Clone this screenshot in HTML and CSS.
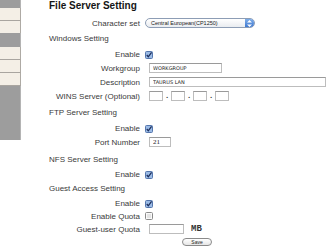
FILE: index.html
```html
<!DOCTYPE html>
<html lang="en">
<head>
  <meta charset="UTF-8" />
  <title>File Server Setting</title>
  <link rel="stylesheet" href="styles.css">
</head>
<body>

  <div class="page">
    <!-- left menu strip -->
    <div class="sidebar">
      <div class="nav-head head-top"></div>
      <div class="nav-item"></div>
      <div class="nav-item last"></div>
      <div class="nav-head head-mid"></div>
      <div class="nav-item"></div>
      <div class="nav-item"></div>
      <div class="nav-item"></div>
      <div class="nav-head head-low"></div>
    </div>

    <div class="content">
      <h1 class="title">File Server Setting</h1>

      <div class="row row-charset">
        <span class="label">Character set</span>
        <div class="select">
          <span class="select-text">Central European(CP1250)</span>
          <span class="select-arrows">
            <svg width="7" height="9" viewBox="0 0 7 9"><path d="M3.5 1 L6 3.6 H1 Z M3.5 8 L6 5.4 H1 Z" fill="#fff"/></svg>
          </span>
        </div>
      </div>

      <!-- Windows -->
      <div class="section">Windows Setting</div>
      <div class="row row-check first">
        <span class="label">Enable</span>
        <span class="check on"><svg width="8" height="8" viewBox="0 0 8 8"><rect x="0.5" y="0.5" width="7" height="7" rx="1" fill="#9bbbe6" stroke="#5576ad"/><path d="M1.8 4 L3.3 5.8 L6.6 1.4" stroke="#1d2f5c" stroke-width="1.3" fill="none"/></svg></span>
      </div>
      <div class="row">
        <span class="label">Workgroup</span>
        <input class="field field-mid" type="text" value="WORKGROUP">
      </div>
      <div class="row">
        <span class="label">Description</span>
        <input class="field field-wide" type="text" value="TAURUS LAN">
      </div>
      <div class="row">
        <span class="label">WINS Server (Optional)</span>
        <div class="ip">
          <input class="field field-ip" type="text">
          <span class="dot">.</span>
          <input class="field field-ip" type="text">
          <span class="dot">.</span>
          <input class="field field-ip" type="text">
          <span class="dot">.</span>
          <input class="field field-ip" type="text">
        </div>
      </div>

      <!-- FTP -->
      <div class="section sec-ftp">FTP Server Setting</div>
      <div class="row row-check first">
        <span class="label">Enable</span>
        <span class="check on"><svg width="8" height="8" viewBox="0 0 8 8"><rect x="0.5" y="0.5" width="7" height="7" rx="1" fill="#9bbbe6" stroke="#5576ad"/><path d="M1.8 4 L3.3 5.8 L6.6 1.4" stroke="#1d2f5c" stroke-width="1.3" fill="none"/></svg></span>
      </div>
      <div class="row">
        <span class="label">Port Number</span>
        <input class="field field-port" type="text" value="21">
      </div>

      <!-- NFS -->
      <div class="section sec-nfs">NFS Server Setting</div>
      <div class="row row-check after-nfs">
        <span class="label">Enable</span>
        <span class="check on"><svg width="8" height="8" viewBox="0 0 8 8"><rect x="0.5" y="0.5" width="7" height="7" rx="1" fill="#9bbbe6" stroke="#5576ad"/><path d="M1.8 4 L3.3 5.8 L6.6 1.4" stroke="#1d2f5c" stroke-width="1.3" fill="none"/></svg></span>
      </div>

      <!-- Guest -->
      <div class="section sec-guest">Guest Access Setting</div>
      <div class="row row-check after-guest">
        <span class="label">Enable</span>
        <span class="check on"><svg width="8" height="8" viewBox="0 0 8 8"><rect x="0.5" y="0.5" width="7" height="7" rx="1" fill="#9bbbe6" stroke="#5576ad"/><path d="M1.8 4 L3.3 5.8 L6.6 1.4" stroke="#1d2f5c" stroke-width="1.3" fill="none"/></svg></span>
      </div>
      <div class="row row-check short">
        <span class="label">Enable Quota</span>
        <span class="check"><svg width="8" height="8" viewBox="0 0 8 8"><rect x="0.5" y="0.5" width="7" height="7" rx="1" fill="#fafafa" stroke="#8a8a8a"/><rect x="2" y="2" width="4" height="4" fill="#e4e4e4"/></svg></span>
      </div>
      <div class="row">
        <span class="label">Guest-user Quota</span>
        <div class="quota">
          <input class="field field-quota" type="text">
          <span class="unit">MB</span>
        </div>
      </div>

      <div class="actions">
        <button class="save">Save</button>
      </div>
    </div>
  </div>

</body>
</html>
```

FILE: styles.css
```css
body {
  margin: 0;
  background: #fff;
  font-family: 'Liberation Sans', Arial, Helvetica, sans-serif;
  font-size: 8px;
  color: #3a3a3a;
}

.page {
  display: flex;
  align-items: flex-start;
}

.sidebar {
  width: 21px;
  flex-shrink: 0;
}

.nav-head {
  background-color: #9d9d9d;
  border-right: 1px solid #b4b4b4;
}

.head-top { height: 8px; }
.head-mid { height: 14px; }
.head-low { height: 54px; }

.nav-item {
  height: 12px;
  background-color: #f4efe6;
  border-bottom: 1px solid #a9a59f;
  border-right: 1px solid #aeaaa4;
}

.nav-item.last {
  border-bottom: none;
}

.content {
  flex: 1;
}

.title {
  margin: 0 0 0 28px;
  height: 12px;
  line-height: 12px;
  font-size: 10px;
  font-weight: bold;
  color: #151515;
}

.section {
  height: 14px;
  line-height: 14px;
  padding-left: 28px;
  margin-top: 3px;
}

.sec-ftp { margin-top: 3px; }
.sec-nfs { margin-top: 4px; }
.sec-guest { margin-top: 1px; }

.row {
  display: grid;
  grid-template-columns: 119px auto;
  column-gap: 5px;
  align-items: center;
  justify-content: start;
  height: 14px;
}

.row-charset {
  height: 12px;
  margin-top: 5px;
}

.row-check {
  height: 13px;
}

.row-check.first {
  margin-top: 2px;
}

.row-check.after-nfs {
  margin-top: 1px;
}

.row-check.after-guest {
  margin-top: 1px;
}

.row-check.short {
  height: 12px;
}

.label {
  text-align: right;
  white-space: nowrap;
}

/* aqua-like popup */
.select {
  display: flex;
  align-items: center;
  width: 110px;
  height: 10px;
  box-sizing: border-box;
  border: 1px solid #8d9db5;
  border-radius: 5px;
  background: linear-gradient(#ffffff, #e9ecf0);
  overflow: hidden;
}

.select-text {
  padding-left: 5px;
  font-size: 5.5px;
  color: #222;
  flex: 1;
}

.select-arrows {
  display: flex;
  align-items: center;
  justify-content: center;
  width: 9px;
  height: 100%;
  background: linear-gradient(#7eaeea, #3f78cf);
}

.check {
  display: flex;
  align-items: center;
}

.check svg {
  display: block;
}

.field {
  box-sizing: border-box;
  height: 10px;
  margin: 0 0 0 4px;
  padding: 0 3px;
  border: 1px solid #bdbdbd;
  border-top-color: #9a9a9a;
  background: #fff;
  font-family: 'DejaVu Sans', 'Liberation Sans', sans-serif;
  font-size: 5px;
  color: #222;
  outline: none;
}

.field-mid { width: 73px; }
.field-wide { width: 177px; }
.field-port {
  width: 22px;
  font-family: 'Liberation Serif', serif;
  font-size: 7px;
}
.field-quota { width: 35px; }

.ip {
  display: flex;
  align-items: center;
}

.field-ip {
  width: 14px;
  margin: 0;
}

.ip .field-ip:first-child {
  margin-left: 4px;
}

.dot {
  width: 8px;
  text-align: center;
  font-weight: bold;
  line-height: 8px;
}

.quota {
  display: flex;
  align-items: center;
}

.unit {
  margin-left: 7px;
  font-family: 'Liberation Mono', monospace;
  font-size: 9px;
  font-weight: bold;
  color: #333;
}

.actions {
  height: 12px;
  display: flex;
  align-items: center;
  padding-left: 161px;
}

.save {
  width: 30px;
  height: 8px;
  padding: 0;
  border: 1px solid #8a8a8a;
  border-radius: 4px;
  background: linear-gradient(#fff, #e6e6e6);
  font-family: 'Liberation Sans', Arial, sans-serif;
  font-size: 5px;
  line-height: 6px;
  color: #222;
}
```
